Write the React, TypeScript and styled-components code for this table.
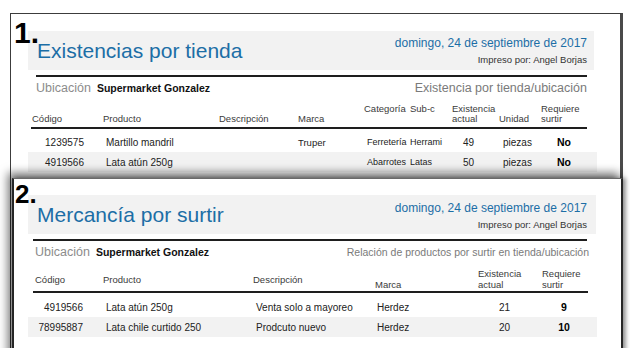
import React from "react";
import styled, { createGlobalStyle } from "styled-components";

const Global = createGlobalStyle`
  html, body { margin: 0; padding: 0; background: #fff; }
  body { font-family: "Liberation Sans", Arial, sans-serif; overflow: hidden; }
`;

const BLUE = "#1c6ea6";

const Desktop = styled.div`
  position: relative;
  width: 630px;
  height: 348px;
  overflow: hidden;
  background: #fff;
`;

const Window = styled.div<{ $left: number; $top: number; $width: number; $front?: boolean }>`
  position: absolute;
  left: ${(p) => p.$left}px;
  top: ${(p) => p.$top}px;
  width: ${(p) => p.$width}px;
  height: 420px;
  box-sizing: border-box;
  background: #fff;
  ${(p) =>
    p.$front
      ? `
    border-top: 1px solid #6a6a6a;
    border-left: 2px solid #262626;
    border-right: 2px solid #262626;
    padding: 16px 25px 0 14px;
    box-shadow: -4px -5px 9px rgba(0,0,0,0.55), 3px 0 4px rgba(0,0,0,0.35);
  `
      : `
    border-top: 1px solid #3c3c3c;
    border-left: 1px solid #3c3c3c;
    border-right: 3px solid #4a4a4a;
    padding: 17px 26px 0 17px;
  `}
`;

const Badge = styled.div<{ $size: number; $left: number; $top: number }>`
  position: absolute;
  left: ${(p) => p.$left}px;
  top: ${(p) => p.$top}px;
  font-family: "Liberation Sans", Arial, sans-serif;
  font-weight: 700;
  font-size: ${(p) => p.$size}px;
  line-height: ${(p) => p.$size}px;
  color: #000;
  z-index: 2;
`;

const Band = styled.div<{ $pr: number }>`
  display: flex;
  justify-content: space-between;
  align-items: flex-start;
  height: 39px;
  background: #f2f2f2;
  padding: 0 ${(p) => p.$pr}px 0 9px;
`;

const Title = styled.div`
  font-size: 21px;
  line-height: 39px;
  color: ${BLUE};
  white-space: nowrap;
`;

const DateBlock = styled.div<{ $pt: number }>`
  text-align: right;
  padding-top: ${(p) => p.$pt}px;
  white-space: nowrap;
`;

const DateLine = styled.div`
  font-size: 12px;
  line-height: 16px;
  color: ${BLUE};
`;

const Printed = styled.div`
  font-size: 9.5px;
  line-height: 12px;
  margin-top: 3px;
  color: #333;
`;

const Rule = styled.div<{ $l: number; $r: number }>`
  height: 2px;
  background: #1e1e1e;
  margin: 5px ${(p) => p.$r}px 0 ${(p) => p.$l}px;
`;

const LocationRow = styled.div<{ $pl: number }>`
  display: flex;
  align-items: center;
  justify-content: space-between;
  height: 20px;
  margin-top: 1px;
  padding: 0 7px 0 ${(p) => p.$pl}px;
  white-space: nowrap;
`;

const LocLeft = styled.div`
  display: flex;
  align-items: center;
`;

const LocLabel = styled.span`
  font-size: 12.5px;
  color: #8c8c8c;
`;

const LocValue = styled.span`
  font-size: 10.5px;
  font-weight: 700;
  color: #111;
  margin-left: 6px;
`;

const Subtitle = styled.span<{ $size: number }>`
  font-size: ${(p) => p.$size}px;
  color: #7a7a7a;
`;

const Table = styled.div<{ $mt: number }>`
  width: 569px;
  margin-top: ${(p) => p.$mt}px;
`;

const HeadRow = styled.div<{ $cols: string; $lh: number; $pb: number }>`
  display: grid;
  grid-template-columns: ${(p) => p.$cols};
  height: ${(p) => p.$lh * 2}px;
  padding-bottom: ${(p) => p.$pb}px;
  font-size: 9.5px;
  line-height: ${(p) => p.$lh}px;
  color: #3a3a3a;
`;

const HeadCell = styled.div<{ $v: string; $pl: number }>`
  display: flex;
  flex-direction: column;
  justify-content: ${(p) => p.$v};
  padding-left: ${(p) => p.$pl}px;
  white-space: nowrap;
`;

const HeadRule = styled.div<{ $l: number; $w: number }>`
  height: 2px;
  background: #1e1e1e;
  margin-left: ${(p) => p.$l}px;
  width: ${(p) => p.$w}px;
`;

const Rows = styled.div<{ $mt: number }>`
  margin-top: ${(p) => p.$mt}px;
`;

const DataRow = styled.div<{ $cols: string; $stripe: boolean }>`
  display: grid;
  grid-template-columns: ${(p) => p.$cols};
  align-items: center;
  height: 20px;
  background: ${(p) => (p.$stripe ? "#f2f2f2" : "transparent")};
  color: #222;
`;

const DataCell = styled.div<{ $align: string; $pl: number; $pr: number; $size: number; $bold?: boolean }>`
  text-align: ${(p) => p.$align};
  padding-left: ${(p) => p.$pl}px;
  padding-right: ${(p) => p.$pr}px;
  font-weight: ${(p) => (p.$bold ? 700 : 400)};
  font-size: ${(p) => p.$size}px;
  color: ${(p) => (p.$bold ? "#000" : "#222")};
  white-space: nowrap;
`;

type Col = {
  head: string[];
  w: number;
  v: "flex-start" | "flex-end" | "center";
  hpl: number;
  align: "left" | "right" | "center";
  pl: number;
  pr: number;
  size?: number;
  bold?: boolean;
};

type Report = {
  badge: string;
  badgeSize: number;
  badgeLeft: number;
  badgeTop: number;
  left: number;
  top: number;
  width: number;
  front?: boolean;
  title: string;
  bandPr: number;
  datePt: number;
  ruleL: number;
  ruleR: number;
  locPl: number;
  subtitle: string;
  subtitleSize: number;
  tableMt: number;
  headLh: number;
  headPb: number;
  headRuleL: number;
  headRuleW: number;
  rowsMt: number;
  cols: Col[];
  rows: string[][];
};

const reports: Report[] = [
  {
    badge: "1.",
    badgeSize: 30,
    badgeLeft: 3,
    badgeTop: 4,
    left: 10,
    top: 13,
    width: 613,
    title: "Existencias por tienda",
    bandPr: 7,
    datePt: 4,
    ruleL: 8,
    ruleR: 7,
    locPl: 8,
    subtitle: "Existencia por tienda/ubicación",
    subtitleSize: 12.5,
    tableMt: 6,
    headLh: 10,
    headPb: 3,
    headRuleL: 3,
    headRuleW: 556,
    rowsMt: 3,
    cols: [
      { head: ["Código"], w: 72, v: "flex-end", hpl: 4, align: "right", pl: 0, pr: 16 },
      { head: ["Producto"], w: 116, v: "flex-end", hpl: 3, align: "left", pl: 6, pr: 0 },
      { head: ["Descripción"], w: 79, v: "flex-end", hpl: 3, align: "left", pl: 3, pr: 0 },
      { head: ["Marca"], w: 66, v: "flex-end", hpl: 3, align: "left", pl: 3, pr: 0, size: 9.5 },
      { head: ["Categoría"], w: 46, v: "flex-start", hpl: 3, align: "left", pl: 6, pr: 0, size: 9 },
      { head: ["Sub-c"], w: 42, v: "flex-start", hpl: 3, align: "left", pl: 3, pr: 0, size: 9 },
      { head: ["Existencia", "actual"], w: 50, v: "flex-end", hpl: 3, align: "left", pl: 14, pr: 0 },
      { head: ["Unidad"], w: 38, v: "flex-end", hpl: 0, align: "left", pl: 4, pr: 0 },
      { head: ["Requiere", "surtir"], w: 60, v: "flex-end", hpl: 4, align: "left", pl: 20, pr: 0, size: 10.5, bold: true },
    ],
    rows: [
      ["1239575", "Martillo mandril", "", "Truper", "Ferretería", "Herrami", "49", "piezas", "No"],
      ["4919566", "Lata atún 250g", "", "", "Abarrotes", "Latas", "50", "piezas", "No"],
    ],
  },
  {
    badge: "2.",
    badgeSize: 26,
    badgeLeft: 1,
    badgeTop: 2,
    left: 12,
    top: 178,
    width: 611,
    front: true,
    title: "Mercancía por surtir",
    bandPr: 9,
    datePt: 5,
    ruleL: 5,
    ruleR: 9,
    locPl: 7,
    subtitle: "Relación de productos por surtir en tienda/ubicación",
    subtitleSize: 10.5,
    tableMt: 6,
    headLh: 11,
    headPb: 1,
    headRuleL: 5,
    headRuleW: 555,
    rowsMt: 4,
    cols: [
      { head: ["Código"], w: 72, v: "center", hpl: 7, align: "right", pl: 0, pr: 17 },
      { head: ["Producto"], w: 150, v: "center", hpl: 3, align: "left", pl: 6, pr: 0 },
      { head: ["Descripción"], w: 122, v: "center", hpl: 3, align: "left", pl: 6, pr: 0 },
      { head: ["Marca"], w: 103, v: "flex-end", hpl: 3, align: "left", pl: 5, pr: 0 },
      { head: ["Existencia", "actual"], w: 62, v: "flex-end", hpl: 3, align: "right", pl: 0, pr: 27 },
      { head: ["Requiere", "surtir"], w: 60, v: "flex-end", hpl: 5, align: "center", pl: 0, pr: 6, size: 10.5, bold: true },
    ],
    rows: [
      ["4919566", "Lata atún 250g", "Venta solo a mayoreo", "Herdez", "21", "9"],
      ["78995887", "Lata chile curtido 250", "Prodcuto nuevo", "Herdez", "20", "10"],
    ],
  },
];

function ReportWindow({ r }: { r: Report }) {
  const template = r.cols.map((c) => `${c.w}px`).join(" ");
  return (
    <Window $left={r.left} $top={r.top} $width={r.width} $front={r.front}>
      <Badge $size={r.badgeSize} $left={r.badgeLeft} $top={r.badgeTop}>
        {r.badge}
      </Badge>
      <Band $pr={r.bandPr}>
        <Title>{r.title}</Title>
        <DateBlock $pt={r.datePt}>
          <DateLine>domingo, 24 de septiembre de 2017</DateLine>
          <Printed>Impreso por: Angel Borjas</Printed>
        </DateBlock>
      </Band>
      <Rule $l={r.ruleL} $r={r.ruleR} />
      <LocationRow $pl={r.locPl}>
        <LocLeft>
          <LocLabel>Ubicación</LocLabel>
          <LocValue>Supermarket Gonzalez</LocValue>
        </LocLeft>
        <Subtitle $size={r.subtitleSize}>{r.subtitle}</Subtitle>
      </LocationRow>
      <Table $mt={r.tableMt}>
        <HeadRow $cols={template} $lh={r.headLh} $pb={r.headPb}>
          {r.cols.map((c, i) => (
            <HeadCell key={i} $v={c.v} $pl={c.hpl}>
              {c.head.map((h, j) => (
                <span key={j}>{h}</span>
              ))}
            </HeadCell>
          ))}
        </HeadRow>
        <HeadRule $l={r.headRuleL} $w={r.headRuleW} />
        <Rows $mt={r.rowsMt}>
          {r.rows.map((row, i) => (
            <DataRow key={i} $cols={template} $stripe={i % 2 === 1}>
              {row.map((v, j) => {
                const c = r.cols[j];
                return (
                  <DataCell
                    key={j}
                    $align={c.align}
                    $pl={c.pl}
                    $pr={c.pr}
                    $size={c.size ?? 10}
                    $bold={c.bold}
                  >
                    {v}
                  </DataCell>
                );
              })}
            </DataRow>
          ))}
        </Rows>
      </Table>
    </Window>
  );
}

export default function App() {
  return (
    <>
      <Global />
      <Desktop>
        {reports.map((r, i) => (
          <ReportWindow key={i} r={r} />
        ))}
      </Desktop>
    </>
  );
}
